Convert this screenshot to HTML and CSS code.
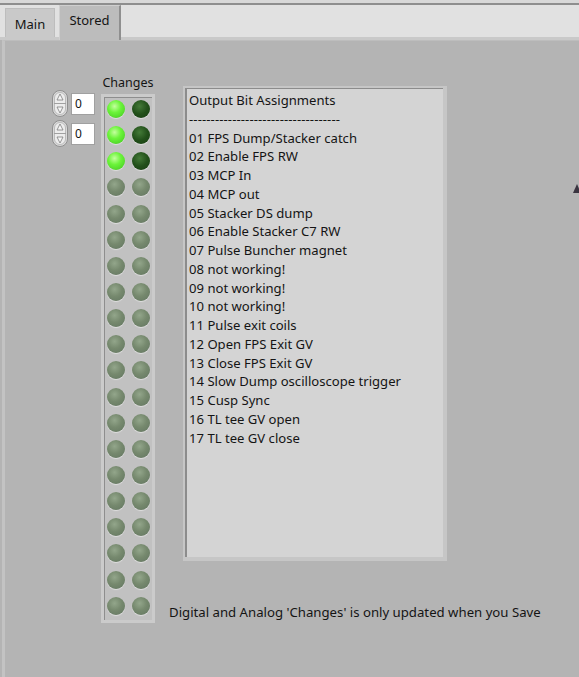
FILE: index.html
```html
<!DOCTYPE html>
<html lang="en">
<head>
    <meta charset="UTF-8">
    <meta name="viewport" content="width=device-width, initial-scale=1.0">
    <title>Stored</title>
    <link rel="stylesheet" href="styles.css">
</head>
<body>
    <div class="top-line"></div>
    <div class="tab-bar">
        <div class="tab">Main</div>
        <div class="tab active">Stored</div>
    </div>

    <div class="panel">
        <div class="spinners">
            <div class="num-control">
                <svg class="spin" width="16" height="27" viewBox="0 0 16 27">
                    <rect x="0.5" y="0.5" width="15" height="26" rx="7.5" fill="#d9d9d9" stroke="#8f8f8f"/>
                    <rect x="2.5" y="2.5" width="11" height="22" rx="5.5" fill="#ececec" stroke="#b0b0b0" stroke-width="0.8"/>
                    <line x1="2" y1="13.5" x2="14" y2="13.5" stroke="#a0a0a0"/>
                    <path d="M8 4 L11 10 L5 10 Z" fill="#f6f6f6" stroke="#7e7e7e" stroke-width="0.8"/>
                    <path d="M8 23 L11 17 L5 17 Z" fill="#f6f6f6" stroke="#7e7e7e" stroke-width="0.8"/>
                </svg>
                <div class="num-box">0</div>
            </div>
            <div class="num-control">
                <svg class="spin" width="16" height="27" viewBox="0 0 16 27">
                    <rect x="0.5" y="0.5" width="15" height="26" rx="7.5" fill="#d9d9d9" stroke="#8f8f8f"/>
                    <rect x="2.5" y="2.5" width="11" height="22" rx="5.5" fill="#ececec" stroke="#b0b0b0" stroke-width="0.8"/>
                    <line x1="2" y1="13.5" x2="14" y2="13.5" stroke="#a0a0a0"/>
                    <path d="M8 4 L11 10 L5 10 Z" fill="#f6f6f6" stroke="#7e7e7e" stroke-width="0.8"/>
                    <path d="M8 23 L11 17 L5 17 Z" fill="#f6f6f6" stroke="#7e7e7e" stroke-width="0.8"/>
                </svg>
                <div class="num-box">0</div>
            </div>
        </div>

        <div class="led-column">
            <div class="led-label">Changes</div>
            <div class="led-box">
                <span class="led on"></span><span class="led dark"></span>
                <span class="led on"></span><span class="led dark"></span>
                <span class="led on"></span><span class="led dark"></span>
                <span class="led"></span><span class="led"></span>
                <span class="led"></span><span class="led"></span>
                <span class="led"></span><span class="led"></span>
                <span class="led"></span><span class="led"></span>
                <span class="led"></span><span class="led"></span>
                <span class="led"></span><span class="led"></span>
                <span class="led"></span><span class="led"></span>
                <span class="led"></span><span class="led"></span>
                <span class="led"></span><span class="led"></span>
                <span class="led"></span><span class="led"></span>
                <span class="led"></span><span class="led"></span>
                <span class="led"></span><span class="led"></span>
                <span class="led"></span><span class="led"></span>
                <span class="led"></span><span class="led"></span>
                <span class="led"></span><span class="led"></span>
                <span class="led"></span><span class="led"></span>
                <span class="led"></span><span class="led"></span>
            </div>
        </div>

        <div class="right-column">
            <div class="text-frame">
                <div class="text-box">
                    <div>Output Bit Assignments</div>
                    <div class="dashes">-----------------------------------</div>
                    <div>01 FPS Dump/Stacker catch</div>
                    <div>02 Enable FPS RW</div>
                    <div>03 MCP In</div>
                    <div>04 MCP out</div>
                    <div>05 Stacker DS dump</div>
                    <div>06 Enable Stacker C7 RW</div>
                    <div>07 Pulse Buncher magnet</div>
                    <div>08 not working!</div>
                    <div>09 not working!</div>
                    <div>10 not working!</div>
                    <div>11 Pulse exit coils</div>
                    <div>12 Open FPS Exit GV</div>
                    <div>13 Close FPS Exit GV</div>
                    <div>14 Slow Dump oscilloscope trigger</div>
                    <div>15 Cusp Sync</div>
                    <div>16 TL tee GV open</div>
                    <div>17 TL tee GV close</div>
                </div>
            </div>
            <div class="note">Digital and Analog 'Changes' is only updated when you Save</div>
        </div>

        <!-- edge of a control cut off by the window -->
        <span class="edge-mark"></span>
    </div>
</body>
</html>
```

FILE: styles.css
```css
body {
    margin: 0;
    background-color: #b4b4b4;
    font-family: "Noto Sans", "Open Sans", sans-serif;
    font-size: 13px;
    color: #141414;
    height: 677px;
    overflow: hidden;
}

.top-line {
    height: 3px;
    background-color: #d8d8d8;
    border-bottom: 2px solid #8e8e8e;
}

.tab-bar {
    height: 35px;
    background-color: #e1e1e1;
    display: flex;
    align-items: flex-end;
    padding-left: 5px;
    box-shadow: inset 0 -3px 0 #c9c9c9;
}

.tab {
    height: 29px;
    width: 50px;
    margin-bottom: 3px;
    background-color: #c9c9c9;
    border: 1px solid #bdbdbd;
    border-bottom: none;
    box-sizing: border-box;
    display: flex;
    justify-content: center;
    padding-top: 6px;
    font-size: 13px;
}

.tab.active {
    height: 35px;
    width: 62px;
    margin-left: 4px;
    margin-bottom: 0;
    background-color: #bcbcbc;
    border-color: #cfcfcf;
    border-right: 2px solid #8f8f8f;
    padding-top: 5px;
}

.panel {
    position: relative;
    height: 637px;
    display: flex;
    align-items: flex-start;
    padding: 34px 0 0 52px;
    box-sizing: border-box;
    border-left: 3px solid #c3c3c3;
    margin-left: 2px;
    border-top: 1px solid #bdbdbd;
}

.spinners {
    margin-top: 15px;
    margin-left: -5px;
    display: flex;
    flex-direction: column;
    gap: 3px;
}

.num-control {
    display: flex;
    align-items: center;
    gap: 3px;
    height: 27px;
}

.spin {
    display: block;
}

.num-box {
    width: 24px;
    height: 22px;
    box-sizing: border-box;
    background-color: #ffffff;
    border: 1px solid #a0a0a0;
    padding-left: 3px;
    line-height: 20px;
    font-size: 12px;
}

.led-column {
    margin-left: 6px;
    width: 54px;
}

.led-label {
    height: 19px;
    line-height: 16px;
    text-align: center;
    font-size: 12.5px;
}

.led-box {
    box-sizing: border-box;
    width: 54px;
    height: 529px;
    background-color: #c1c1c1;
    border: 3px solid #cbcbcb;
    box-shadow: inset 1px 1px 0 #8e8e8e;
    padding: 3px 3px 5px 3px;
    display: grid;
    grid-template-columns: 18px 18px;
    column-gap: 7px;
    row-gap: 8.15px;
    align-content: start;
}

.led {
    width: 18px;
    height: 18px;
    border-radius: 50%;
    background: radial-gradient(circle at 42% 35%, #93a68b 0%, #76896e 45%, #627560 100%);
    box-shadow: 0 1px 1px rgba(255, 255, 255, 0.5);
}

.led.on {
    background: radial-gradient(circle at 42% 35%, #c4ff9e 0%, #6cf43a 40%, #3fc41e 100%);
}

.led.dark {
    background: radial-gradient(circle at 42% 35%, #447a38 0%, #22501a 50%, #173d12 100%);
}

.right-column {
    margin-left: 14px;
    display: flex;
    flex-direction: column;
}

.text-frame {
    margin-top: 11px;
    margin-left: 14px;
    width: 264px;
    height: 475px;
    box-sizing: border-box;
    border: 2px solid #c6c6c6;
    border-right-width: 4px;
    border-bottom-width: 4px;
}

.text-box {
    height: 100%;
    box-sizing: border-box;
    background-color: #d4d4d4;
    border-left: 2px solid #8c8c8c;
    border-top: 1px solid #8c8c8c;
    padding: 2px 0 0 2px;
    line-height: 18.75px;
    font-size: 13.1px;
}

.dashes {
    overflow: hidden;
    white-space: nowrap;
    letter-spacing: 0.1px;
}

.note {
    margin-top: 42px;
    line-height: 18px;
    font-size: 13.2px;
}

.edge-mark {
    position: absolute;
    right: -2px;
    top: 143px;
    width: 0;
    height: 0;
    border-left: 4px solid transparent;
    border-right: 4px solid transparent;
    border-bottom: 9px solid #3a3440;
}
```
